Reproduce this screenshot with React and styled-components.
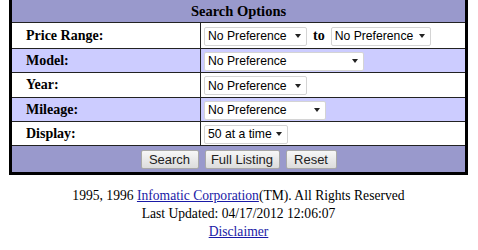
import React from "react";
import styled, { createGlobalStyle } from "styled-components";

const Global = createGlobalStyle`
  html, body { margin: 0; padding: 0; background: #fff; }
  body { font-family: "Liberation Serif", "Times New Roman", serif; color: #000; }
`;

const Page = styled.div`
  padding-left: 9px;
  width: 459px;
`;

const Panel = styled.div`
  border: 3px solid #000;
  border-top: none;
  background: #222;
  display: grid;
  row-gap: 1px;
`;

const HeaderRow = styled.div`
  height: 22px;
  background: #9999cc;
  display: flex;
  align-items: center;
  justify-content: center;
  font-weight: bold;
  font-size: 14.5px;
`;

const Row = styled.div`
  display: grid;
  grid-template-columns: 188px 1fr;
  column-gap: 1px;
  height: ${(p) => p.$h}px;
`;

const Label = styled.div`
  background: ${(p) => (p.$alt ? "#ccccff" : "#fff")};
  display: flex;
  align-items: center;
  padding-left: 14px;
  font-weight: bold;
  font-size: 14px;
`;

const Value = styled.div`
  background: ${(p) => (p.$alt ? "#ccccff" : "#fff")};
  display: flex;
  align-items: center;
  padding-left: 3px;
  gap: 6px;
`;

const SelectWrap = styled.span`
  position: relative;
  display: inline-block;
  width: ${(p) => p.$w}px;
  height: 19px;
`;

const NativeSelect = styled.select`
  appearance: none;
  -webkit-appearance: none;
  width: 100%;
  height: 100%;
  box-sizing: border-box;
  border: 1px solid #d4d4d4;
  border-radius: 2px;
  background: #fff;
  font-family: "Liberation Sans", Arial, sans-serif;
  font-size: 12.2px;
  color: #000;
  padding: 0 12px 0 3px;
  margin: 0;
  outline: none;
`;

const Arrow = styled.span`
  position: absolute;
  right: 6px;
  top: 8px;
  width: 0;
  height: 0;
  border-left: 3.5px solid transparent;
  border-right: 3.5px solid transparent;
  border-top: 4px solid #222;
  pointer-events: none;
`;

const To = styled.span`
  font-weight: bold;
  font-size: 14px;
`;

const ButtonRow = styled.div`
  height: 26px;
  background: #9999cc;
  display: flex;
  align-items: center;
  justify-content: center;
  gap: 6px;
`;

const Button = styled.button`
  height: 19px;
  box-sizing: border-box;
  padding: 0;
  white-space: nowrap;
  border: 1px solid #a8a8a8;
  border-radius: 2px;
  background: linear-gradient(#f7f7f7, #dcdcdc);
  font-family: "Liberation Sans", Arial, sans-serif;
  font-size: 13px;
  color: #222;
  width: ${(p) => p.$w}px;
`;

const Footer = styled.div`
  text-align: center;
  font-size: 13.6px;
  line-height: 18px;
  margin-top: 12px;
`;

const Link = styled.a`
  color: #1a1aa6;
  text-decoration: underline;
`;

function Select({ w, value }) {
  return (
    <SelectWrap $w={w}>
      <NativeSelect defaultValue={value}>
        <option>{value}</option>
      </NativeSelect>
      <Arrow />
    </SelectWrap>
  );
}

export default function App() {
  return (
    <>
      <Global />
      <Page>
        <Panel>
          <HeaderRow>Search Options</HeaderRow>
          <Row $h={25}>
            <Label>Price Range:</Label>
            <Value>
              <Select w={103} value="No Preference" />
              <To>to</To>
              <Select w={100} value="No Preference" />
            </Value>
          </Row>
          <Row $h={23}>
            <Label $alt>Model:</Label>
            <Value $alt>
              <Select w={160} value="No Preference" />
            </Value>
          </Row>
          <Row $h={24}>
            <Label>Year:</Label>
            <Value>
              <Select w={103} value="No Preference" />
            </Value>
          </Row>
          <Row $h={23}>
            <Label $alt>Mileage:</Label>
            <Value $alt>
              <Select w={122} value="No Preference" />
            </Value>
          </Row>
          <Row $h={23}>
            <Label>Display:</Label>
            <Value>
              <Select w={84} value="50 at a time" />
            </Value>
          </Row>
          <ButtonRow>
            <Button $w={58}>Search</Button>
            <Button $w={75}>Full Listing</Button>
            <Button $w={51}>Reset</Button>
          </ButtonRow>
        </Panel>
        <Footer>
          1995, 1996 <Link href="#">Infomatic Corporation</Link>(TM). All Rights Reserved
          <br />
          Last Updated: 04/17/2012 12:06:07
          <br />
          <Link href="#">Disclaimer</Link>
        </Footer>
      </Page>
    </>
  );
}
